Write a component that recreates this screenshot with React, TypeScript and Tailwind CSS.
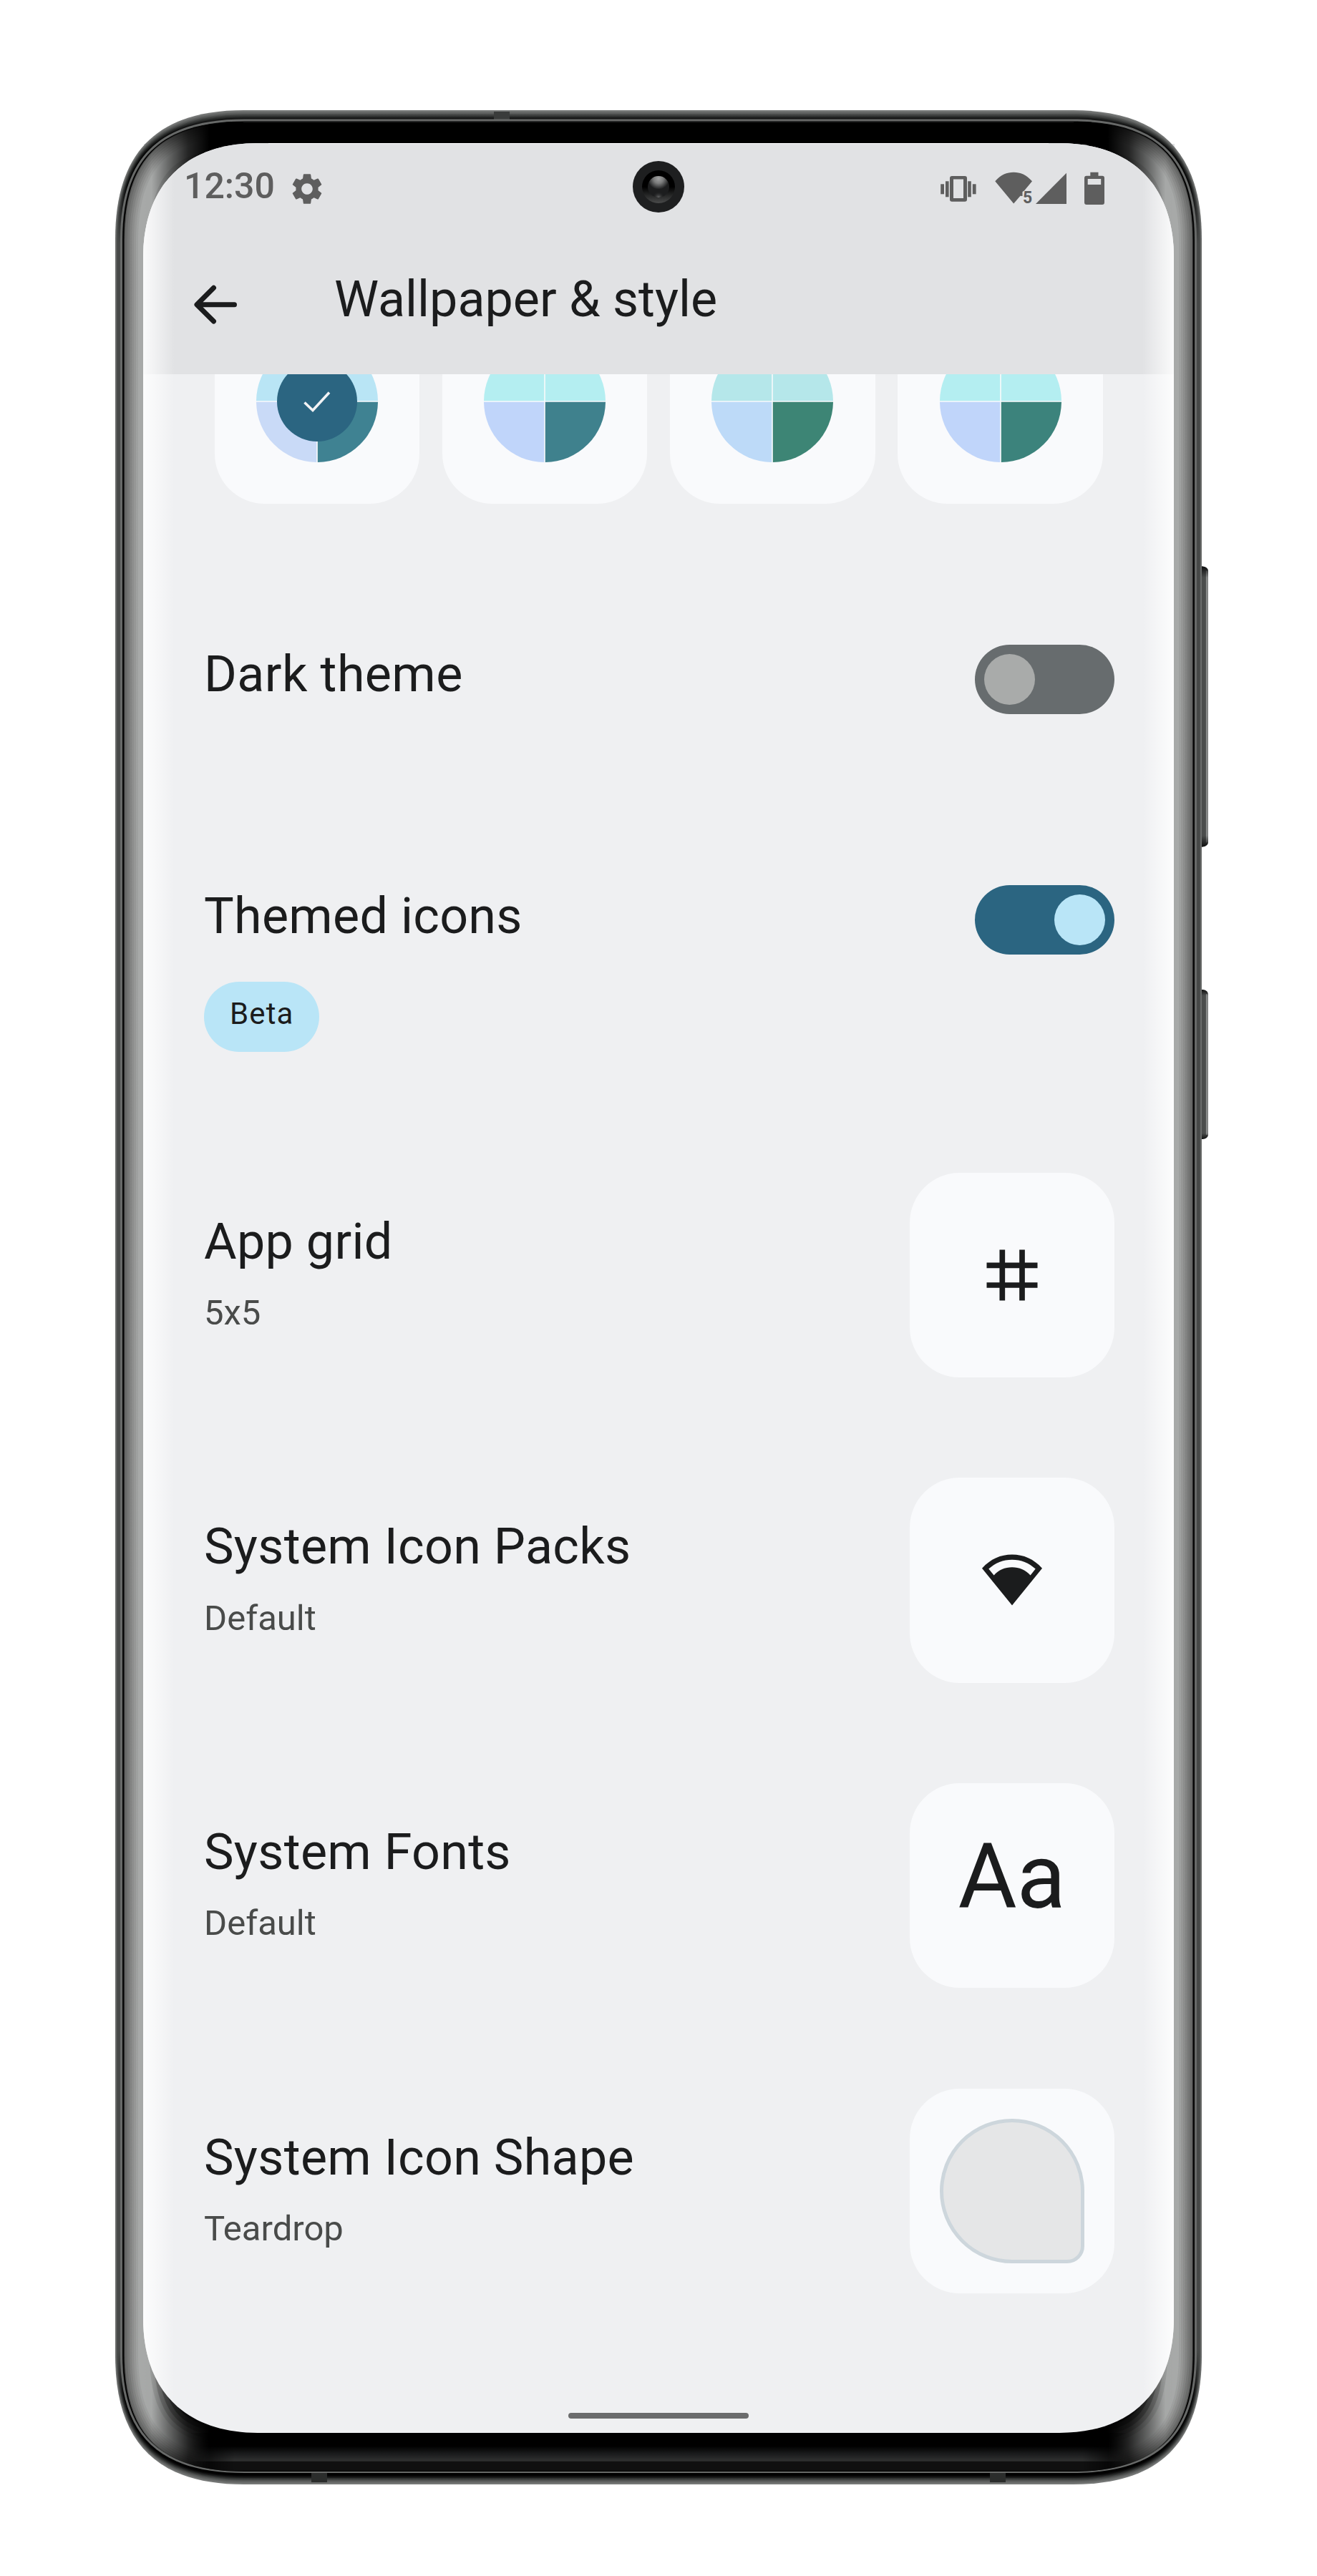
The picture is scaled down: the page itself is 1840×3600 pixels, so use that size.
import type { ReactNode } from "react";
import { MdSettings } from "react-icons/md";

/* ---------- Phone body ---------- */

// Rounded contour of the phone body, inset from its outer edge by
// dx at the sides, dt at the top and db at the bottom.
function contour(dx: number, dt: number = dx, db: number = dt): string {
  const l = 161 + dx;
  const t = 154 + dt;
  const r = 1679 - dx;
  const b = 3472 - db;
  const ext = (d: number) => 180 - 0.9 * d;
  const ctl = (d: number) => (8 * (44.5 - 0.293 * d) - ext(d)) / 3;
  return [
    `M${l} ${t + ext(dt)}`,
    `C${l} ${t + ctl(dt)} ${l + ctl(dx)} ${t} ${l + ext(dx)} ${t}`,
    `L${r - ext(dx)} ${t}`,
    `C${r - ctl(dx)} ${t} ${r} ${t + ctl(dt)} ${r} ${t + ext(dt)}`,
    `L${r} ${b - ext(db)}`,
    `C${r} ${b - ctl(db)} ${r - ctl(dx)} ${b} ${r - ext(dx)} ${b}`,
    `L${l + ext(dx)} ${b}`,
    `C${l + ctl(dx)} ${b} ${l} ${b - ctl(db)} ${l} ${b - ext(db)}`,
    "Z",
  ].join("");
}

// Metal rim, outermost ring first: colours at the top, in the corners, along the sides, at the bottom.
const rimSteps: [string, string, string, string][] = [
  ["#777978", "#737574", "#6c6e6d", "#777978"],
  ["#6b6d6c", "#626463", "#666867", "#6a6c6b"],
  ["#5d5f5e", "#4c4e4d", "#4c4e4d", "#5a5c5b"],
  ["#4d4f4e", "#363837", "#484a49", "#464847"],
  ["#3c3e3d", "#222423", "#464847", "#303231"],
  ["#2b2d2c", "#121313", "#464847", "#1a1b1b"],
  ["#1b1c1c", "#060606", "#484a49", "#090909"],
  ["#111111", "#000000", "#484a49", "#000000"],
];

const glassSteps: [number, string][] = [
  [12.5, "#5a5b5a"],
  [14, "#6b6c6b"],
  [17, "#767776"],
  [20, "#828382"],
  [23, "#8d8e8d"],
  [26, "#979897"],
  [29, "#a0a2a1"],
  [32, "#a9abaa"],
  [48, "#9a9c9b"],
  [54, "#818281"],
  [60, "#636463"],
  [66, "#434443"],
  [72, "#262727"],
];

const keys: [number, number][] = [
  [791.5, 392],
  [1383, 209],
];

function PhoneBody() {
  return (
    <svg className="absolute inset-0" width="1840" height="3600" viewBox="0 0 1840 3600" aria-hidden="true">
      <defs>
        <linearGradient id="shade" gradientUnits="userSpaceOnUse" x1="173" y1="0" x2="1667" y2="0">
          <stop offset="0" stopColor="#000" stopOpacity="0" />
          <stop offset="0.026" stopColor="#000" stopOpacity="0.02" />
          <stop offset="0.042" stopColor="#000" stopOpacity="0.4" />
          <stop offset="0.06" stopColor="#000" stopOpacity="0.78" />
          <stop offset="0.08" stopColor="#000" />
          <stop offset="0.92" stopColor="#000" />
          <stop offset="0.94" stopColor="#000" stopOpacity="0.78" />
          <stop offset="0.958" stopColor="#000" stopOpacity="0.4" />
          <stop offset="0.974" stopColor="#000" stopOpacity="0.02" />
          <stop offset="1" stopColor="#000" stopOpacity="0" />
        </linearGradient>
        <linearGradient id="chin" gradientUnits="userSpaceOnUse" x1="0" y1="3400" x2="0" y2="3453">
          <stop offset="0.35" stopColor="#000" />
          <stop offset="0.55" stopColor="#1a1b1c" />
          <stop offset="0.74" stopColor="#303131" />
          <stop offset="0.76" stopColor="#101010" />
          <stop offset="1" stopColor="#101010" />
        </linearGradient>
        <linearGradient id="chinFade" gradientUnits="userSpaceOnUse" x1="262" y1="0" x2="1578" y2="0">
          <stop offset="0" stopColor="#000" />
          <stop offset="0.05" stopColor="#fff" />
          <stop offset="0.95" stopColor="#fff" />
          <stop offset="1" stopColor="#000" />
        </linearGradient>
        <mask id="chinMask" maskUnits="userSpaceOnUse" x="262" y="3400" width="1316" height="60">
          <rect x="262" y="3400" width="1316" height="60" fill="url(#chinFade)" />
        </mask>
        <clipPath id="glass">
          <path d={contour(12, 16, 18)} />
        </clipPath>
        {rimSteps.map(([top, corner, side, bottom], i) => (
          <linearGradient key={i} id={`rim${i}`} gradientUnits="userSpaceOnUse" x1="0" y1="154" x2="0" y2="3472">
            <stop offset="0.005" stopColor={top} />
            <stop offset="0.018" stopColor={corner} />
            <stop offset="0.032" stopColor={corner} />
            <stop offset="0.056" stopColor={side} />
            <stop offset="0.944" stopColor={side} />
            <stop offset="0.962" stopColor={corner} />
            <stop offset="0.985" stopColor={corner} />
            <stop offset="0.996" stopColor={bottom} />
          </linearGradient>
        ))}
        <linearGradient id="key" x1="0" y1="0" x2="1" y2="0">
          <stop offset="0.6" stopColor="#4a4c4b" />
          <stop offset="0.72" stopColor="#8b8d8c" />
          <stop offset="1" stopColor="#7a7c7b" />
        </linearGradient>
        <linearGradient id="keyEnds" x1="0" y1="0" x2="0" y2="1">
          <stop offset="0" stopColor="#000" stopOpacity="0.8" />
          <stop offset="0.04" stopColor="#000" stopOpacity="0" />
          <stop offset="0.96" stopColor="#000" stopOpacity="0" />
          <stop offset="1" stopColor="#000" stopOpacity="0.8" />
        </linearGradient>
      </defs>

      <rect x="201" y="201" width="1440" height="200" fill="#e1e2e4" />

      {keys.map(([y, h]) => (
        <g key={y}>
          <path d={`M1670 ${y}H1680Q1688 ${y + 1} 1688 ${y + 7}V${y + h - 7}Q1688 ${y + h - 1} 1680 ${y + h}H1670Z`} fill="#4a4c4b" />
          <rect x="1679" y={y + 6} width="9" height={h - 12} fill="url(#key)" />
          <path d={`M1670 ${y}H1680Q1688 ${y + 1} 1688 ${y + 7}V${y + h - 7}Q1688 ${y + h - 1} 1680 ${y + h}H1670Z`} fill="url(#keyEnds)" />
        </g>
      ))}

      {rimSteps.map((_, i) => (
        <path key={i} d={contour(i, i * 1.65, i * 1.8)} fill={`url(#rim${i})`} />
      ))}

      {/* Antenna bands */}
      <rect x="435" y="3456" width="22" height="13" fill="#2b2d2c" />
      <rect x="1383" y="3456" width="22" height="13" fill="#2b2d2c" />
      <rect x="690" y="156" width="22" height="11" fill="#3a3c3b" />

      <path d={contour(7, 12.5, 16)} fill="#676968" />
      <path d={contour(10, 15.5, 19)} fill="#060606" />

      {/* Curved glass between the metal rim and the display */}
      <g clipPath="url(#glass)">
        {glassSteps.map(([d, color]) => (
          <path key={d} d={contour(d, d + 4, d + 5)} fill={color} />
        ))}
        <rect x="161" y="154" width="1518" height="3318" fill="url(#shade)" />
        <rect x="262" y="3400" width="1316" height="53" fill="url(#chin)" mask="url(#chinMask)" />
      </g>
      <path d="M340 170.300H1500" stroke="#1e1f1f" strokeWidth="1.500" />
    </svg>
  );
}

function Camera() {
  return (
    <svg className="absolute left-[684px] top-[25px]" width="72" height="72" viewBox="0 0 72 72" aria-hidden="true">
      <defs>
        <linearGradient id="ring" x1="0" y1="0" x2="0" y2="1">
          <stop offset="0.5" stopColor="#000" />
          <stop offset="0.7" stopColor="#1d1e1e" />
          <stop offset="1" stopColor="#4a4b4b" />
        </linearGradient>
        <radialGradient id="lensTop" cx="0.5" cy="0.12" r="0.5">
          <stop offset="0" stopColor="#a2a3a3" />
          <stop offset="0.45" stopColor="#7b7c7c" />
          <stop offset="1" stopColor="#1c1d1e" />
        </radialGradient>
        <radialGradient id="lensBottom" cx="0.5" cy="1" r="0.28">
          <stop offset="0" stopColor="#6c6d6d" />
          <stop offset="1" stopColor="#1c1d1e" stopOpacity="0" />
        </radialGradient>
      </defs>
      <circle cx="36" cy="36" r="36" fill="#1e1f20" />
      <circle cx="36" cy="36" r="23" fill="url(#ring)" />
      <circle cx="36" cy="36" r="15" fill="url(#lensTop)" />
      <circle cx="36" cy="36" r="15" fill="url(#lensBottom)" />
    </svg>
  );
}

/* ---------- Status bar ---------- */

function VibrateIcon() {
  return (
    <svg width="50" height="50" viewBox="0 0 50 50" fill="#5e5e5e">
      <path fillRule="evenodd" d="M16 8h18a3 3 0 0 1 3 3v29.700a3 3 0 0 1-3 3H16a3 3 0 0 1-3-3V11a3 3 0 0 1 3-3ZM18 12.500V39h14V12.500Z" />
      <rect x="0.2" y="19.300" width="4.800" height="14" />
      <rect x="7" y="15.300" width="4.600" height="22" />
      <rect x="38.200" y="15.300" width="4.600" height="22" />
      <rect x="44.800" y="19.300" width="4.800" height="14" />
    </svg>
  );
}

function WifiIcon() {
  return (
    <svg width="56" height="60" viewBox="0 0 56 60" fill="#5e5e5e">
      <path d="M0.300 15.300C8 6 17 2.700 26.200 2.700S44 6 52 15.300L41 28.500L38.500 30L38.500 36L35.500 35.700L26.200 46.500Z" />
      <text x="39" y="46.200" fontFamily="Roboto, sans-serif" fontWeight="700" fontSize="23">
        5
      </text>
    </svg>
  );
}

function SignalIcon() {
  return (
    <svg width="43" height="50" viewBox="0 0 43 50" fill="#5e5e5e">
      <path d="M0 47L43 3.700V47Z" />
    </svg>
  );
}

function BatteryIcon() {
  return (
    <svg width="28" height="50" viewBox="0 0 28 50" fill="#5e5e5e">
      <path
        fillRule="evenodd"
        d="M8.300 2.700H19.500V7.700H25a3 3 0 0 1 3 3V45a3 3 0 0 1-3 3H3a3 3 0 0 1-3-3V10.700a3 3 0 0 1 3-3H8.300ZM4.700 12V20H23.200V12Z"
      />
    </svg>
  );
}

function TopBar() {
  return (
    <header className="h-[323px] shrink-0 bg-[#e1e2e4] pt-[30px]">
      <div className="flex h-[60px] items-start pl-[57px] pr-[97px] text-[#5e5e5e]">
        <span className="text-[50px] leading-[60px] font-medium">12:30</span>
        <MdSettings size={52} className="mt-[8px] ml-[19px]" />
        <div className="mt-[8px] ml-auto flex items-start">
          <VibrateIcon />
          <span className="w-[26px]" />
          <WifiIcon />
          <span className="w-px" />
          <SignalIcon />
          <span className="w-[25px]" />
          <BatteryIcon />
        </div>
      </div>
      <div className="mt-[88px] flex items-start pl-[71px] text-[#1b1c1d]">
        <svg width="62" height="56" viewBox="0 0 62 56" className="mt-[20px]" fill="none" stroke="#1b1c1d" strokeWidth="7" strokeLinecap="round" strokeLinejoin="round">
          <path d="M56.500 27.700H4.500M27.500 4.200L4 27.700L27.500 51" />
        </svg>
        <h1 className="ml-[134px] text-[70px] leading-[80px]">Wallpaper &amp; style</h1>
      </div>
    </header>
  );
}

/* ---------- Colour swatches ---------- */

type Palette = { top: string; left: string; right: string; selected?: boolean };

const palettes: Palette[] = [
  { top: "#b9e5f5", left: "#c9daf7", right: "#3f8292", selected: true },
  { top: "#b4eef1", left: "#c0d5fa", right: "#3f818d" },
  { top: "#b5e7ea", left: "#bddaf8", right: "#3d8575" },
  { top: "#b4eef1", left: "#c0d5fa", right: "#3c837c" },
];

function Swatch({ top, left, right, selected }: Palette) {
  return (
    <div className="flex h-[286px] w-[286.500px] items-center justify-center rounded-[70px] bg-[#f9fafc]">
      <svg width="170" height="170" viewBox="0 0 170 170">
        <path d="M0 84.200A85 85 0 0 1 84.200 0V84.200ZM85.800 0A85 85 0 0 1 170 84.200H85.800Z" fill={top} />
        <path d="M0 85.800H84.200V170A85 85 0 0 1 0 85.800Z" fill={left} />
        <path d="M85.800 85.800H170A85 85 0 0 1 85.800 170Z" fill={right} />
        {selected && (
          <>
            <circle cx="85" cy="85" r="56" fill="#2b6581" />
            <path d="M67.500 86.500L79 97.500L102 72.500" fill="none" stroke="#f2f3f5" strokeWidth="3.600" />
          </>
        )}
      </svg>
    </div>
  );
}

/* ---------- Settings rows ---------- */

function Toggle({ on }: { on: boolean }) {
  return (
    <span
      role="switch"
      aria-checked={on}
      className={
        on
          ? "flex h-[97.500px] w-[195px] shrink-0 items-center justify-end rounded-full bg-[#2b6581] px-[13px]"
          : "flex h-[97.500px] w-[195px] shrink-0 items-center justify-start rounded-full bg-[#676c6e] px-[13px]"
      }
    >
      <span className={on ? "size-[71px] rounded-full bg-[#b9e5f7]" : "size-[71px] rounded-full bg-[#a9abaa]"} />
    </span>
  );
}

function OptionRow({ title, value, children }: { title: string; value: string; children: ReactNode }) {
  return (
    <div className="flex h-[286.500px] items-start justify-between">
      <div className="pt-[56px]">
        <h2 className="text-[70px] leading-[80px] tracking-[0.3px] text-[#1b1c1d]">{title}</h2>
        <p className="mt-[30.500px] text-[49px] leading-[60px] text-[#494b4a]">{value}</p>
      </div>
      <div className="flex size-[286.500px] items-center justify-center rounded-[70px] bg-[#f9fafc]">{children}</div>
    </div>
  );
}

function GridIcon() {
  return (
    <svg width="72" height="72" viewBox="0 0 72 72" stroke="#1b1c1d" strokeWidth="7.700">
      <path d="M0.500 22.300H71.500M0.500 50H71.500M22.300 0.500V71.500M50 0.500V71.500" />
    </svg>
  );
}

function IconPackIcon() {
  return (
    <svg width="84" height="72" viewBox="0 0 84 72">
      <path
        fillRule="evenodd"
        fill="#1b1c1d"
        d="M0 19.700C12 6.500 26 0.500 42 0.500S72 6.500 84 19.700L42 71.400ZM9.300 20.600L16.600 29.400C23.500 21.800 32 18.200 42 18.200S60.500 21.800 67.600 29.400L74.700 20.600C65.500 12 54.500 7.700 42 7.700S18.500 12 9.300 20.600Z"
      />
    </svg>
  );
}

export default function App() {
  return (
    <div className="relative h-[3600px] w-[1840px] overflow-hidden bg-white pt-[200px] pl-[200px] font-[Roboto,sans-serif]">
      <PhoneBody />
      <main className="relative flex h-[3200px] w-[1440px] flex-col bg-[#eff0f2] [clip-path:path('M0_160C0_59_59_0_160_0H1280C1381_0_1440_59_1440_160V3040C1440_3141_1381_3200_1280_3200H160C59_3200_0_3141_0_3040Z')]">
        <TopBar />

        <section className="flex h-[180.500px] shrink-0 items-end gap-[31.800px] overflow-hidden pl-[99.500px]">
          {palettes.map((p, i) => (
            <Swatch key={i} {...p} />
          ))}
        </section>

        <section className="flex flex-col pr-[83px] pl-[85px]">
          <div className="mt-[197px] flex h-[97.500px] items-start justify-between">
            <h2 className="pt-px text-[70px] leading-[80px] tracking-[0.4px] text-[#1b1c1d]">Dark theme</h2>
            <Toggle on={false} />
          </div>

          <div className="mt-[238.500px] flex h-[233px] items-start justify-between">
            <div className="pt-[3px]">
              <h2 className="text-[70px] leading-[80px] tracking-[0.3px] text-[#1b1c1d]">Themed icons</h2>
              <span className="mt-[52.500px] flex h-[97.500px] w-[161px] rounded-full bg-[#b9e5f7] pt-[21px] pl-[36px] text-[42px] leading-[48px] tracking-[1.100px] text-[#1b1c1d]">
                Beta
              </span>
            </div>
            <Toggle on />
          </div>

          <div className="mt-[169px] flex flex-col gap-[140.200px]">
            <OptionRow title="App grid" value="5x5">
              <GridIcon />
            </OptionRow>
            <OptionRow title="System Icon Packs" value="Default">
              <IconPackIcon />
            </OptionRow>
            <OptionRow title="System Fonts" value="Default">
              <span className="-mt-[24px] text-[126px] leading-[150px] text-[#1b1c1d]">Aa</span>
            </OptionRow>
            <OptionRow title="System Icon Shape" value="Teardrop">
              <span className="size-[202px] rounded-[101px] rounded-br-[24px] border-[5.500px] border-[#cdd6dc] bg-[#e5e6e7]" />
            </OptionRow>
          </div>
        </section>

        <span className="mx-auto mt-[167px] h-[8px] w-[252px] shrink-0 rounded-full bg-[#6b6c6d]" />

        {/* Front camera and the light falling on the curved display edges */}
        <Camera />
        <span className="absolute inset-y-0 left-0 w-[44px] bg-linear-to-r from-white/85 to-white/0" />
        <span className="absolute inset-y-0 right-0 w-[44px] bg-linear-to-l from-white/85 to-white/0" />
        <span className="absolute inset-x-[175px] top-0 h-px bg-white" />
      </main>
    </div>
  );
}
